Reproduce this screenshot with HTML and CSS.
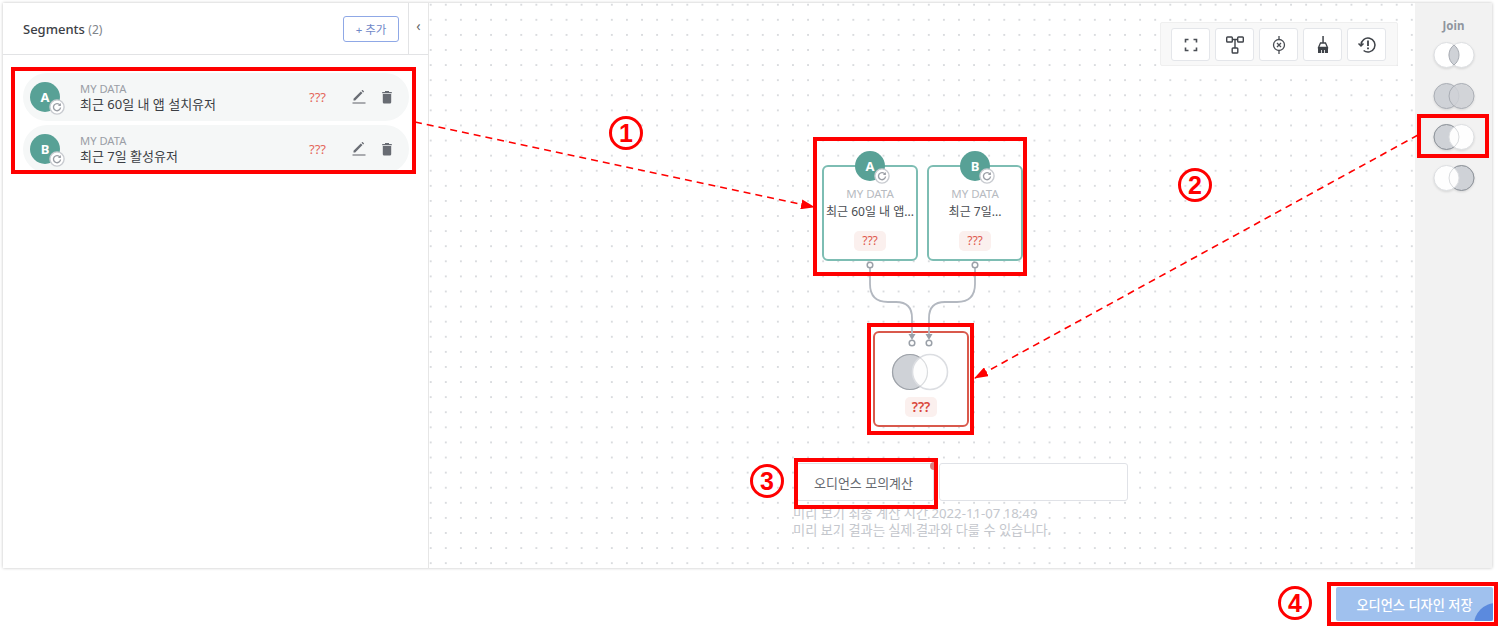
FILE: index.html
```html
<!DOCTYPE html>
<html lang="ko">
<head>
  <meta charset="UTF-8" />
  <title>Audience Designer</title>
  <link rel="stylesheet" href="styles.css">
</head>
<body>
  <svg class="defs" width="0" height="0">
    <symbol id="refresh" viewBox="0 0 14 14">
      <circle cx="7" cy="7" r="6.2" fill="#fff" stroke="#c9ccd1" stroke-width="1.2"/>
      <path d="M9.6 5.4A3.1 3.1 0 1 0 10.1 7.4" fill="none" stroke="#9a9ea5" stroke-width="1.2"/>
      <path d="M10.4 3.6v2.6H7.8z" fill="#9a9ea5"/>
    </symbol>
    <symbol id="pencil" viewBox="0 0 14 14">
      <path d="M1.5 10.200 8.800 2.900l1.700 1.700-7.300 7.300H1.500zM9.500 2.200l1-.9 1.600 1.600-.9 1z" fill="#6a6e75" transform="translate(0 -1.500)"/>
      <path d="M.5 13h13" stroke="#6a6e75" stroke-width="1.100"/>
    </symbol>
    <symbol id="trash" viewBox="0 0 12 14">
      <path d="M1.200 2h2.800V1h4v1h2.800v1.300H1.200zM1.800 4h8.400v8.200q0 1.300-1.300 1.300H3.100q-1.300 0-1.300-1.300z" fill="#686c73"/>
    </symbol>
  </svg>

  <div class="app">
    <aside class="segments">
      <header class="segments-head">
        <div class="segments-title">Segments <span class="count">(2)</span></div>
        <button class="add-btn">+ 추가</button>
        <div class="collapse">‹</div>
      </header>
      <ul class="segment-list">
        <li class="segment">
          <div class="avatar">A<svg class="badge"><use href="#refresh"/></svg></div>
          <div class="segment-text">
            <div class="kind">MY DATA</div>
            <div class="name">최근 60일 내 앱 설치유저</div>
          </div>
          <span class="unknown">???</span>
          <svg class="act pencil"><use href="#pencil"/></svg>
          <svg class="act trash"><use href="#trash"/></svg>
        </li>
        <li class="segment">
          <div class="avatar">B<svg class="badge"><use href="#refresh"/></svg></div>
          <div class="segment-text">
            <div class="kind">MY DATA</div>
            <div class="name">최근 7일 활성유저</div>
          </div>
          <span class="unknown">???</span>
          <svg class="act pencil"><use href="#pencil"/></svg>
          <svg class="act trash"><use href="#trash"/></svg>
        </li>
      </ul>
    </aside>

    <main class="canvas">
      <div class="toolbar">
        <button class="tool">
          <svg width="14" height="14" viewBox="0 0 14 14" fill="none" stroke="#4a4e54" stroke-width="1.600"><path d="M1.500 4.500v-3h3M9.500 1.500h3v3M12.500 9.500v3h-3M4.500 12.500h-3v-3"/></svg>
        </button>
        <button class="tool">
          <svg width="20" height="20" viewBox="0 0 20 20" fill="none" stroke="#3f4349" stroke-width="1.400"><rect x="1.700" y="2" width="5.600" height="5" rx=".8"/><rect x="12.700" y="2" width="5.600" height="5" rx=".8"/><rect x="7.200" y="13" width="5.600" height="5" rx=".8"/><path d="M7.300 4.500h5.400M10 4.500V13"/></svg>
        </button>
        <button class="tool">
          <svg width="16" height="22" viewBox="0 0 16 22" fill="none" stroke="#4a4e54" stroke-width="1.300"><circle cx="8" cy="11" r="5.500"/><path d="M8 2v3.500M8 16.500V20M6 9l4 4M10 9l-4 4"/></svg>
        </button>
        <button class="tool">
          <svg width="14" height="20" viewBox="0 0 14 20" fill="#3f4349"><rect x="6.300" y="1" width="1.500" height="7"/><path d="M4.500 8h5l2 4.500H2.500z" fill="none" stroke="#3f4349" stroke-width="1.300"/><path d="M2 12.500h10V18H2z"/><path d="M5 15h.8v3H5zM8 15h.8v3H8z" fill="#fff"/></svg>
        </button>
        <button class="tool">
          <svg width="20" height="18" viewBox="0 0 20 18" fill="none" stroke="#3f4349" stroke-width="1.500"><path d="M4 9a7 7 0 1 1 2.600 5.500"/><path d="M1.500 7.500L4 10l2.500-2.500"/><path d="M11 4.500v5.500M11 11.500v1.700" stroke-width="1.800"/></svg>
        </button>
      </div>

      <div class="node node-a">
        <div class="avatar node-avatar">A<svg class="badge"><use href="#refresh"/></svg></div>
        <div class="kind">MY DATA</div>
        <div class="name">최근 60일 내 앱...</div>
        <div class="pill">???</div>
      </div>
      <div class="node node-b">
        <div class="avatar node-avatar">B<svg class="badge"><use href="#refresh"/></svg></div>
        <div class="kind">MY DATA</div>
        <div class="name">최근 7일...</div>
        <div class="pill">???</div>
      </div>
      <div class="node join-node">
        <svg class="join-venn" width="60" height="38" viewBox="0 0 60 38">
          <circle cx="19" cy="19" r="17.500" fill="#cfd2d7" stroke="#9fa3aa" stroke-width="1.200"/>
          <circle cx="39" cy="19" r="17.500" fill="#fff" fill-opacity=".95" stroke="#dcdee2" stroke-width="1.600"/>
          <circle cx="19" cy="19" r="17.500" fill="none" stroke="#9fa3aa" stroke-opacity=".35" stroke-width="1.200"/>
        </svg>
        <div class="pill pill-bold">???</div>
      </div>

      <svg class="wires" viewBox="429 3 986 565">
        <g fill="none" stroke="#b3b8c0" stroke-width="1.800">
          <path d="M870 268v16q0 18 18 18h8q16 0 16 16v16"/>
          <path d="M975 268v16q0 18 -18 18h-12q-16 0 -16 16v16"/>
        </g>
        <g fill="#9aa0a8">
          <path d="M908.500 334h7l-3.500 6z"/>
          <path d="M925.500 334h7l-3.500 6z"/>
        </g>
        <g fill="#fff" stroke="#9aa0a8" stroke-width="1.500">
          <circle cx="870" cy="265" r="2.800"/>
          <circle cx="975" cy="265" r="2.800"/>
          <circle cx="912" cy="343" r="2.800"/>
          <circle cx="929" cy="343" r="2.800"/>
        </g>
      </svg>

      <div class="calc">
        <div class="calc-row">
          <button class="calc-btn">오디언스 모의계산</button>
          <div class="calc-result"></div>
        </div>
        <p class="calc-hint">미리 보기 최종 계산 시간 2022-11-07 18:49<br>미리 보기 결과는 실제 결과와 다를 수 있습니다.</p>
      </div>
    </main>

    <aside class="join">
      <div class="join-title">Join</div>
      <button class="venn">
        <svg width="42" height="28" viewBox="0 0 42 28"><circle cx="13.500" cy="14" r="12.500" fill="#fff" stroke="#dcdee1"/><circle cx="28.500" cy="14" r="12.500" fill="#fff" stroke="#dcdee1"/><path d="M21 4a12.500 12.500 0 0 1 0 20 12.500 12.500 0 0 1 0-20z" fill="#cfd2d7" stroke="#a9adb4"/></svg>
      </button>
      <button class="venn">
        <svg width="42" height="28" viewBox="0 0 42 28"><circle cx="13.500" cy="14" r="12.500" fill="#cfd2d7" stroke="#a9adb4"/><circle cx="28.500" cy="14" r="12.500" fill="#cfd2d7" fill-opacity=".8" stroke="#a9adb4"/></svg>
      </button>
      <button class="venn">
        <svg width="42" height="28" viewBox="0 0 42 28"><circle cx="13.500" cy="14" r="12.500" fill="#cfd2d7" stroke="#8f949b"/><circle cx="28.500" cy="14" r="12.500" fill="#fff" fill-opacity=".95" stroke="#dcdee1"/><circle cx="13.500" cy="14" r="12.500" fill="none" stroke="#8f949b" stroke-opacity=".3"/></svg>
      </button>
      <button class="venn">
        <svg width="42" height="28" viewBox="0 0 42 28"><circle cx="28.500" cy="14" r="12.500" fill="#cfd2d7" stroke="#8f949b"/><circle cx="13.500" cy="14" r="12.500" fill="#fff" fill-opacity=".95" stroke="#dcdee1"/><circle cx="28.500" cy="14" r="12.500" fill="none" stroke="#8f949b" stroke-opacity=".3"/></svg>
      </button>
    </aside>
  </div>

  <div class="save-row">
    <button class="save-btn">오디언스 디자인 저장<span class="save-corner"></span></button>
  </div>

  <!-- annotations drawn on top of the screenshot -->
  <svg class="arrows" viewBox="0 0 1498 630">
    <defs>
      <marker id="head" markerWidth="14" markerHeight="10" refX="13" refY="5" orient="auto" markerUnits="userSpaceOnUse">
        <path d="M0 0L14 5L0 10z" fill="#f00"/>
      </marker>
    </defs>
    <g stroke="#f00" stroke-width="1.600" stroke-dasharray="7 5" fill="none">
      <path d="M415 122L814 207" marker-end="url(#head)"/>
      <path d="M1418 135L975 378" marker-end="url(#head)"/>
    </g>
  </svg>
  <div class="mark mark-list"></div>
  <div class="mark mark-nodes"></div>
  <div class="mark mark-join"></div>
  <div class="mark mark-venn"></div>
  <div class="mark mark-calc"></div>
  <div class="mark mark-save"></div>
  <div class="step step-1">1</div>
  <div class="step step-2">2</div>
  <div class="step step-3">3</div>
  <div class="step step-4">4</div>
</body>
</html>
```

FILE: styles.css
```css
/* Base */
* {
  box-sizing: border-box;
}

html, body {
  height: 630px;
  overflow: hidden;
}

body {
  position: relative;
  margin: 0;
  padding: 3px 0 0 3px;
  background-color: #fff;
  color: #333;
  font-family: "Noto Sans", "Noto Sans CJK KR", sans-serif;
}

button {
  font-family: inherit;
}

.defs {
  position: absolute;
}

/* Frame */
.app {
  display: flex;
  width: 1489px;
  height: 565px;
  box-shadow: 0 0 3px rgba(0, 0, 0, 0.25);
}

/* Segments panel */
.segments {
  width: 426px;
  flex: none;
  background-color: #fff;
  border-right: 1px solid #e6e6e6;
}

.segments-head {
  display: flex;
  align-items: center;
  height: 52px;
  padding-left: 20px;
  border-bottom: 1px solid #e2e3e5;
}

.segments-title {
  flex: 1;
  font-size: 13px;
  font-weight: 500;
  color: #3c4046;
}

.count {
  font-size: 12px;
  font-weight: 400;
  color: #80848a;
}

.add-btn {
  width: 56px;
  height: 26px;
  margin-right: 9px;
  padding: 0;
  background-color: #fff;
  border: 1px solid #8fa8e6;
  border-radius: 3px;
  color: #7088c8;
  font-size: 11.5px;
}

.collapse {
  width: 20px;
  height: 100%;
  border-left: 1px solid #e2e3e5;
  color: #666;
  font-size: 14px;
  line-height: 46px;
  text-align: center;
}

.segment-list {
  display: flex;
  flex-direction: column;
  gap: 4px;
  margin: 18px 0 0;
  padding: 0 0 0 20px;
  list-style: none;
}

.segment {
  display: flex;
  align-items: center;
  width: 386px;
  height: 48px;
  padding-left: 7px;
  background-color: #f5f7f7;
  border-radius: 24px;
}

.avatar {
  position: relative;
  flex: none;
  width: 30px;
  height: 30px;
  background-color: #58a196;
  border-radius: 50%;
  color: #fff;
  font-size: 13px;
  font-weight: 700;
  line-height: 30px;
  text-align: center;
}

.badge {
  position: absolute;
  left: 19px;
  top: 17px;
  width: 16px;
  height: 16px;
}

.segment-text {
  flex: 1;
  margin-left: 20px;
}

.kind {
  font-size: 11.2px;
  line-height: 14px;
  color: #9a9ea6;
}

.name {
  font-size: 13px;
  line-height: 16px;
  color: #3b3e44;
}

.unknown {
  margin-right: 26px;
  font-size: 13px;
  color: #e4675c;
}

.act {
  flex: none;
}

.pencil {
  width: 14px;
  height: 14px;
  margin-right: 15px;
}

.trash {
  width: 12px;
  height: 14px;
  margin-right: 16px;
}

/* Canvas */
.canvas {
  position: relative;
  flex: none;
  width: 986px;
  background-color: #fff;
  background-image: radial-gradient(circle, #d9dbde 0.9px, transparent 1.3px);
  background-size: 15.1px 15.1px;
  background-position: -5.85px -5.85px;
}

.toolbar {
  position: absolute;
  left: 731px;
  top: 19px;
  display: flex;
  gap: 5px;
  width: 238px;
  height: 44px;
  padding: 5px 10px;
  background-color: #f8f8f8;
  border: 1px solid #efefef;
  border-radius: 2px;
}

.tool {
  display: flex;
  align-items: center;
  justify-content: center;
  width: 39px;
  height: 33px;
  padding: 0;
  background-color: #fff;
  border: 1px solid #e4e6ea;
  border-radius: 3px;
}

.wires {
  position: absolute;
  left: 0;
  top: 0;
  width: 986px;
  height: 565px;
}

/* Diagram nodes */
.node {
  position: absolute;
  display: flex;
  flex-direction: column;
  align-items: center;
  width: 96px;
  height: 96px;
  background-color: #fff;
  border: 2px solid #7dbdb3;
  border-radius: 6px;
  text-align: center;
}

.node-a {
  left: 393px;
  top: 162px;
}

.node-b {
  left: 498px;
  top: 162px;
}

.node-avatar {
  margin-top: -16px;
}

.node .kind {
  margin-top: 6px;
  color: #b7bbc1;
  font-size: 11.5px;
}

.node .name {
  margin-top: 3px;
  color: #4a4d52;
  font-size: 12px;
  white-space: nowrap;
}

.pill {
  width: 32px;
  height: 20px;
  margin-top: auto;
  margin-bottom: 8px;
  background-color: #fbf0ee;
  border-radius: 5px;
  color: #e0594c;
  font-size: 12px;
  line-height: 20px;
}

.join-node {
  left: 444px;
  top: 328px;
  border-color: #d9594c;
}

.join-venn {
  margin-top: 20px;
}

.pill-bold {
  font-size: 13.5px;
  font-weight: 600;
  color: #d9483c;
}

/* Preview calculation */
.calc {
  position: absolute;
  left: 364px;
  top: 460px;
}

.calc-row {
  display: flex;
  margin-left: 4px;
}

.calc-btn {
  width: 137px;
  height: 38px;
  padding: 0 4px 0 0;
  background-color: #fff;
  border: 1px solid #e0e2e7;
  border-radius: 2px;
  color: #66696f;
  font-size: 13px;
}

.calc-result {
  width: 189px;
  height: 38px;
  margin-left: 5px;
  background-color: #fff;
  border: 1px solid #e0e2e7;
  border-radius: 3px;
}

.calc-btn::after {
  content: "";
  position: absolute;
  left: 137px;
  top: -1px;
  width: 8px;
  height: 8px;
  background-color: #d98080;
  border-radius: 50%;
}

.calc-hint {
  margin: 4px 0 0;
  color: #c4c7cd;
  font-size: 13.2px;
  line-height: 17px;
}

/* Join panel */
.join {
  flex: 1;
  display: flex;
  flex-direction: column;
  align-items: center;
  background-color: #f2f2f2;
}

.join-title {
  height: 38px;
  padding-top: 15px;
  color: #8f959e;
  font-size: 11.5px;
  font-weight: 700;
}

.venn {
  display: flex;
  justify-content: center;
  height: 41px;
  padding: 0;
  background: none;
  border: none;
}

.venn svg {
  filter: drop-shadow(0 1px 1px rgba(0, 0, 0, 0.12));
}

/* Save */
.save-row {
  display: flex;
  justify-content: flex-end;
  margin-top: 19px;
  padding-right: 5px;
}

.save-btn {
  position: relative;
  width: 157px;
  height: 34px;
  padding: 0;
  overflow: hidden;
  background-color: #a0c1ee;
  border: none;
  border-radius: 2px;
  color: #fff;
  font-size: 13.2px;
  font-weight: 500;
}

.save-corner {
  position: absolute;
  right: -25px;
  bottom: -26px;
  width: 44px;
  height: 44px;
  background-color: #5b8ade;
  border-radius: 50%;
}

/* Annotations */
.arrows {
  position: absolute;
  left: 0;
  top: 0;
  width: 1498px;
  height: 630px;
}

.mark {
  position: absolute;
  border: 4px solid #f00;
}

.mark-list {
  left: 11px;
  top: 67px;
  width: 405px;
  height: 107px;
}

.mark-nodes {
  left: 813px;
  top: 137px;
  width: 214px;
  height: 139px;
}

.mark-join {
  left: 867px;
  top: 323px;
  width: 107px;
  height: 112px;
}

.mark-venn {
  left: 1417px;
  top: 114px;
  width: 72px;
  height: 44px;
}

.mark-calc {
  left: 794px;
  top: 458px;
  width: 144px;
  height: 51px;
}

.mark-save {
  left: 1327px;
  top: 582px;
  width: 171px;
  height: 44px;
}

.step {
  position: absolute;
  width: 34px;
  height: 34px;
  border: 3px solid #f00;
  border-radius: 50%;
  color: #f00;
  font-family: "Liberation Sans", sans-serif;
  font-size: 25px;
  font-weight: 700;
  line-height: 28px;
  text-align: center;
}

.step-1 {
  left: 609px;
  top: 116px;
}

.step-2 {
  left: 1178px;
  top: 168px;
}

.step-3 {
  left: 750px;
  top: 464px;
}

.step-4 {
  left: 1278px;
  top: 586px;
}
```
